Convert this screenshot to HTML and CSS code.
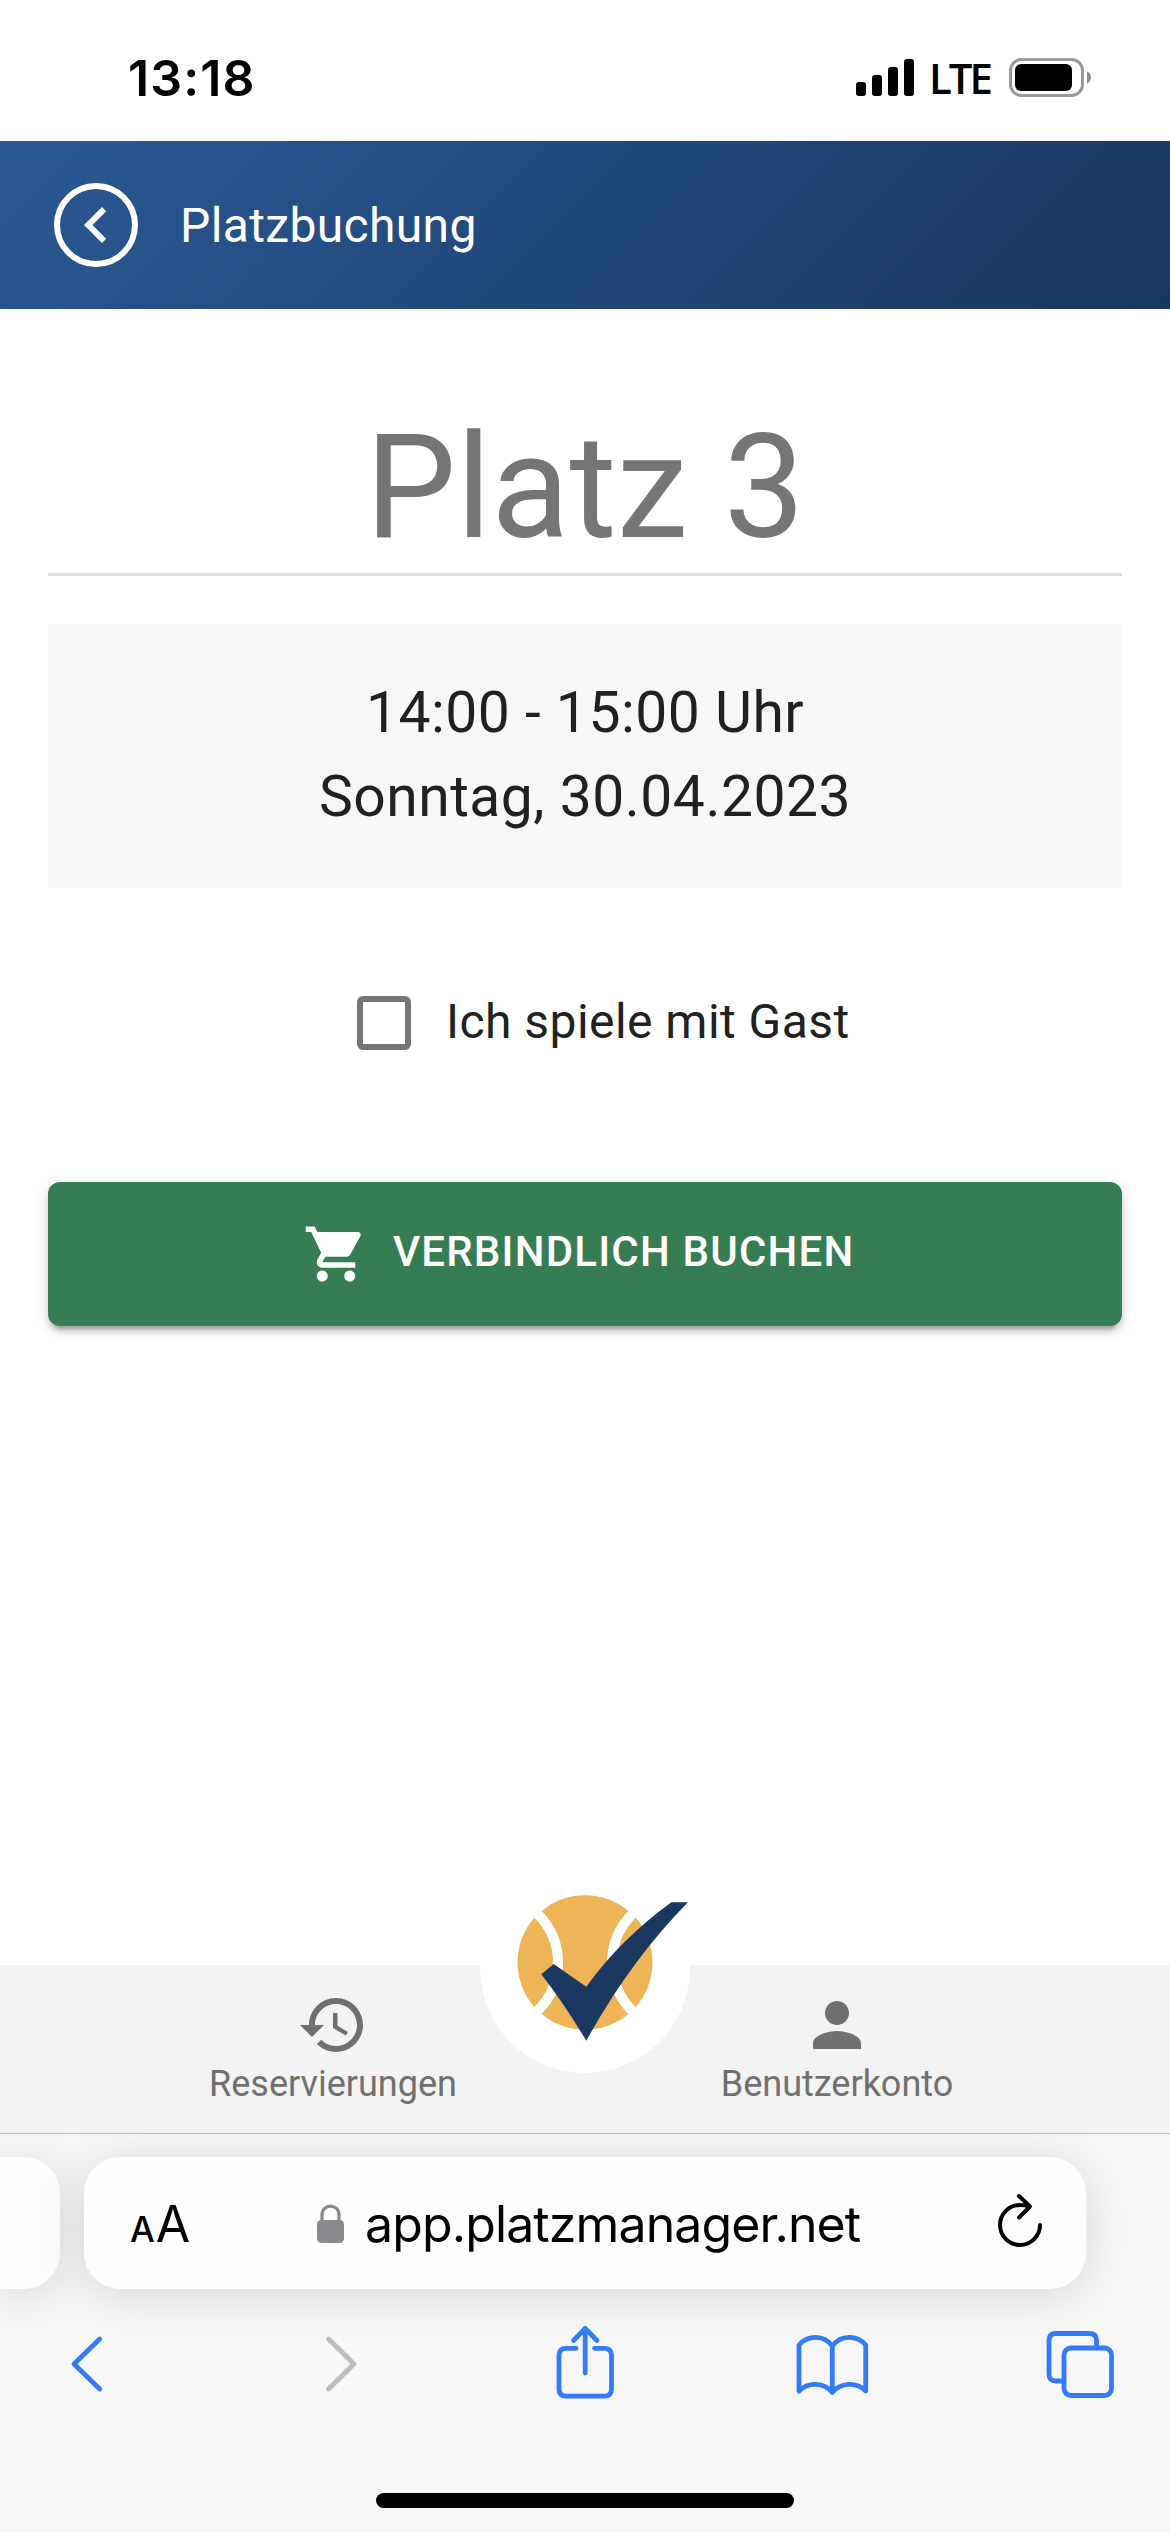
FILE: index.html
```html
<!DOCTYPE html>
<html lang="de">
<head>
<meta charset="utf-8">
<title>Platzbuchung</title>
<link rel="stylesheet" href="styles.css">
</head>
<body>
<div class="screen">
  <div class="status">
    <span class="status-time">13:18</span>
    <div class="status-right">
      <svg class="signal" viewBox="0 0 58 38"><rect y="23" width="10" height="14" rx="3"/><rect x="16" y="16" width="10" height="21" rx="3"/><rect x="32" y="8" width="10" height="29" rx="3"/><rect x="48" width="10" height="37" rx="3"/></svg>
      <span class="network">LTE</span>
      <svg class="battery" viewBox="0 0 83 39"><rect x="1.5" y="1.5" width="72" height="36" rx="11" fill="none" stroke="#999" stroke-width="3"/><rect x="6" y="6" width="57" height="27" rx="6"/><path d="M78 13.500C83.300 15.500 83.300 23.500 78 25.500Z" fill="#8c8c8c"/></svg>
    </div>
  </div>

  <header class="appbar">
    <button class="back" aria-label="Zurück"><svg viewBox="0 0 24 24"><path d="M15.410 7.410 14 6l-6 6 6 6 1.410-1.410L10.830 12z"/></svg></button>
    <span class="appbar-title">Platzbuchung</span>
  </header>

  <main class="content">
    <h1 class="court">Platz 3</h1>
    <div class="details">
      <div class="slot-time">14:00 - 15:00 Uhr</div>
      <div class="slot-date">Sonntag, 30.04.2023</div>
    </div>
    <label class="guest"><span class="checkbox"></span><span class="guest-label">Ich spiele mit Gast</span></label>
    <button class="book">
      <svg viewBox="0 0 24 24"><path d="M7 18c-1.100 0-1.990.9-1.990 2S5.900 22 7 22s2-.9 2-2-.9-2-2-2zM1 2v2h2l3.600 7.590-1.350 2.450c-.16.28-.25.61-.25.960 0 1.100.9 2 2 2h12v-2H7.420c-.14 0-.25-.11-.25-.25l.03-.12.9-1.630h7.450c.75 0 1.410-.41 1.750-1.030l3.580-6.490c.08-.14.12-.31.12-.48 0-.55-.45-1-1-1H5.210l-.94-2H1zm16 16c-1.100 0-1.990.9-1.990 2s.89 2 1.990 2 2-.9 2-2-.9-2-2-2z"/></svg>
      <span>VERBINDLICH BUCHEN</span>
    </button>
  </main>

  <nav class="nav">
    <a class="nav-item">
      <svg viewBox="0 0 24 24"><path d="M13 3c-4.970 0-9 4.030-9 9H1l3.890 3.890.07.14L9 12H6c0-3.870 3.130-7 7-7s7 3.130 7 7-3.130 7-7 7c-1.930 0-3.680-.79-4.940-2.060l-1.420 1.420C8.270 19.990 10.510 21 13 21c4.970 0 9-4.030 9-9s-4.030-9-9-9zm-1 5v5l4.280 2.540.72-1.210-3.500-2.080V8H12z"/></svg>
      <span>Reservierungen</span>
    </a>
    <a class="nav-item">
      <svg viewBox="0 0 24 24"><path d="M12 12c2.210 0 4-1.790 4-4s-1.790-4-4-4-4 1.790-4 4 1.790 4 4 4zm0 2c-2.670 0-8 1.340-8 4v2h16v-2c0-2.660-5.330-4-8-4z"/></svg>
      <span>Benutzerkonto</span>
    </a>
    <a class="home" aria-label="Start">
      <svg viewBox="0 0 750 720">
        <g fill="#edb458">
          <path d="M245 153A203 203 0 0 1 505 153A218 218 0 0 0 505 462A203 203 0 0 1 245 462A218 218 0 0 0 245 153Z"/>
          <path d="M223 173A188 188 0 0 1 223 441A203 203 0 0 1 223 173Z"/>
          <path d="M527 173A188 188 0 0 0 527 441A203 203 0 0 0 527 173Z"/>
        </g>
        <path fill="#1a3860" d="M244 343L281 312L379 380Q482 238 634 127H684Q512 301 379 542Q310 428 244 343Z"/>
      </svg>
    </a>
  </nav>

  <footer class="browser">
    <div class="tabs">
      <div class="prev-tab"></div>
      <div class="address">
        <span class="reader"><span class="reader-small">A</span>A</span>
        <svg class="lock" viewBox="0 0 27 39"><rect y="16" width="27" height="23" rx="4.500"/><path d="M5 17V11C5-.8 22-.8 22 11V17" fill="none" stroke="#8a8a8e" stroke-width="3.200"/></svg>
        <span class="url">app.platzmanager.net</span>
        <svg class="reload" viewBox="0 0 48 58"><g fill="none" stroke="#000" stroke-width="4" stroke-linecap="round" stroke-linejoin="round"><path d="M44 33A20 20 0 1 1 24 13Q29 13 33 14.500"/><path d="M23 4L34 14.500L23 25.500"/></g></svg>
      </div>
    </div>
    <div class="toolbar">
      <svg viewBox="0 0 84 84"><path d="M56.700 17L31 42L56.700 67"/></svg>
      <svg class="forward" viewBox="0 0 84 84"><path d="M29.500 17L55 42L29.500 67"/></svg>
      <svg class="share" viewBox="0 0 84 84"><path d="M33 26.300H23Q16 26.300 16 33.500V67Q16 74.200 23 74.200H61.500Q68.500 74.200 68.500 67V33.500Q68.500 26.300 61.500 26.300H51.500"/><path d="M42.200 51V6.500M30.500 18.500L42.200 6.500L54 18.500"/></svg>
      <svg class="bookmarks" viewBox="0 0 84 84"><path d="M9 69V23C18 12.800 34 12.800 42.300 24C50.500 12.800 67 12.800 75.700 23V69C67 60 51 60 42.300 70.500C34 60 18 60 9 69ZM42.300 24V70"/></svg>
      <svg class="overview" viewBox="0 0 84 84"><rect x="27" y="26" width="47.500" height="47.500" rx="7"/><path d="M27 59H19Q12 59 12 52V18.500Q12 11.500 19 11.500H52.500Q59.500 11.500 59.500 18.500V26"/></svg>
    </div>
    <div class="indicator"></div>
  </footer>
</div>
</body>
</html>
```

FILE: styles.css
```css
* { box-sizing: border-box; }
body { margin: 0; background: #fff; }
svg { display: block; flex: none; }
button { border: 0; padding: 0; font: inherit; color: inherit; }

.screen {
  width: 1170px;
  height: 2532px;
  display: flex;
  flex-direction: column;
  overflow: hidden;
  background: #fff;
  font-family: Roboto, sans-serif;
  color: #212121;
}

/* system status bar */
.status {
  height: 141px;
  flex: none;
  display: flex;
  justify-content: space-between;
  padding: 0 78px 0 128px;
  font-family: Inter, sans-serif;
  color: #000;
}
.status-time { font-size: 50px; font-weight: 600; line-height: 60px; padding-top: 48px; letter-spacing: 1.1px; }
.status-right { display: flex; align-items: flex-start; }
.signal { width: 58px; height: 38px; margin-top: 59px; }
.network { font-family: "Open Sans", sans-serif; font-size: 42px; font-weight: 600; line-height: 50px; margin-top: 53px; width: 95px; padding-left: 15px; letter-spacing: -3px; }
.battery { width: 83px; height: 39px; margin-top: 58px; }

/* app header */
.appbar {
  height: 168px;
  flex: none;
  display: flex;
  align-items: center;
  padding-left: 54px;
  background: linear-gradient(135deg, #2a5994, #19365f);
  color: #fff;
}
.back { width: 84px; height: 84px; border: 6px solid #fff; border-radius: 50%; background: none; display: flex; align-items: center; justify-content: center; }
.back svg { width: 72px; height: 72px; fill: #fff; }
.appbar-title { font-size: 48px; margin-left: 42px; letter-spacing: .36px; }

.content { flex: 1; display: flex; flex-direction: column; padding: 94px 48px 0; }
.court { margin: 0; font-size: 144px; line-height: 170px; font-weight: 400; text-align: center; color: #757575; border-bottom: 3px solid #e0e0e0; }
.details { margin-top: 48px; height: 264px; padding-top: 47px; background: #f7f7f7; font-size: 57px; line-height: 84px; text-align: center; letter-spacing: .5px; }
.guest { display: flex; align-items: center; margin: 108px 0 0 309px; height: 54px; font-size: 48px; letter-spacing: .45px; }
.checkbox { width: 54px; height: 54px; border: 6px solid #757575; border-radius: 6px; }
.guest-label { margin: -3px 0 0 35px; }
.book {
  height: 144px;
  margin-top: 132px;
  display: flex;
  align-items: center;
  padding-left: 255px;
  gap: 24px;
  border-radius: 12px;
  background: #377d53;
  color: #fff;
  font-size: 42px;
  font-weight: 500;
  letter-spacing: 1.2px;
  box-shadow: 0 9px 3px -6px rgba(0,0,0,.2), 0 6px 6px rgba(0,0,0,.14), 0 3px 15px rgba(0,0,0,.12);
}
.book svg { width: 66px; height: 66px; fill: #fff; }
.book span { margin-top: -5px; }

/* app navigation */
.nav {
  position: relative;
  height: 168px;
  flex: none;
  display: flex;
  justify-content: center;
  background: #f3f3f3;
  color: #707070;
  font-size: 36px;
}
.nav-item { width: 504px; display: flex; flex-direction: column; align-items: center; padding-top: 24px; line-height: 46px; }
.nav-item svg { width: 72px; height: 72px; fill: currentColor; }
.home { position: absolute; left: 480px; top: -102px; width: 210px; height: 210px; border-radius: 50%; background: #fff; }
.home svg { width: 250px; height: 240px; margin: -3px 0 0 -20px; }

/* browser controls */
.browser {
  height: 399px;
  flex: none;
  border-top: 1px solid #bcbcbc;
  background: #f7f7f7;
  position: relative;
}
.tabs { display: flex; gap: 24px; padding-top: 23px; }
.prev-tab, .address { height: 132px; background: #fdfdfd; box-shadow: 0 6px 48px rgba(0,0,0,.13); }
.prev-tab { width: 60px; border-radius: 0 36px 36px 0; }
.address { width: 1002px; border-radius: 36px; display: flex; align-items: center; padding-left: 46px; font-family: Inter, sans-serif; font-size: 50px; color: #000; }
.reader { width: 187px; font-size: 50px; padding-top: 2px; white-space: nowrap; }
.reader-small { font-size: 35px; font-weight: 500; letter-spacing: 1px; }
.lock { width: 27px; height: 39px; fill: #8a8a8e; }
.url { width: 630px; padding: 2px 0 0 21px; letter-spacing: -.88px; }
.reload { width: 48px; height: 58px; margin: -4px 0 0 22px; }
.toolbar { display: flex; padding: 33px 0 0 43px; }
.toolbar svg { width: 84px; height: 84px; fill: none; stroke: #347bf7; stroke-width: 4.8; stroke-linecap: round; stroke-linejoin: round; }
.toolbar .forward { stroke: #bdbdbd; margin-left: 172px; }
.toolbar .share { margin-left: 160px; }
.toolbar .bookmarks, .toolbar .overview { margin-left: 163px; }
.indicator { width: 418px; height: 15px; border-radius: 8px; background: #000; margin: 87px auto 0; }
```
